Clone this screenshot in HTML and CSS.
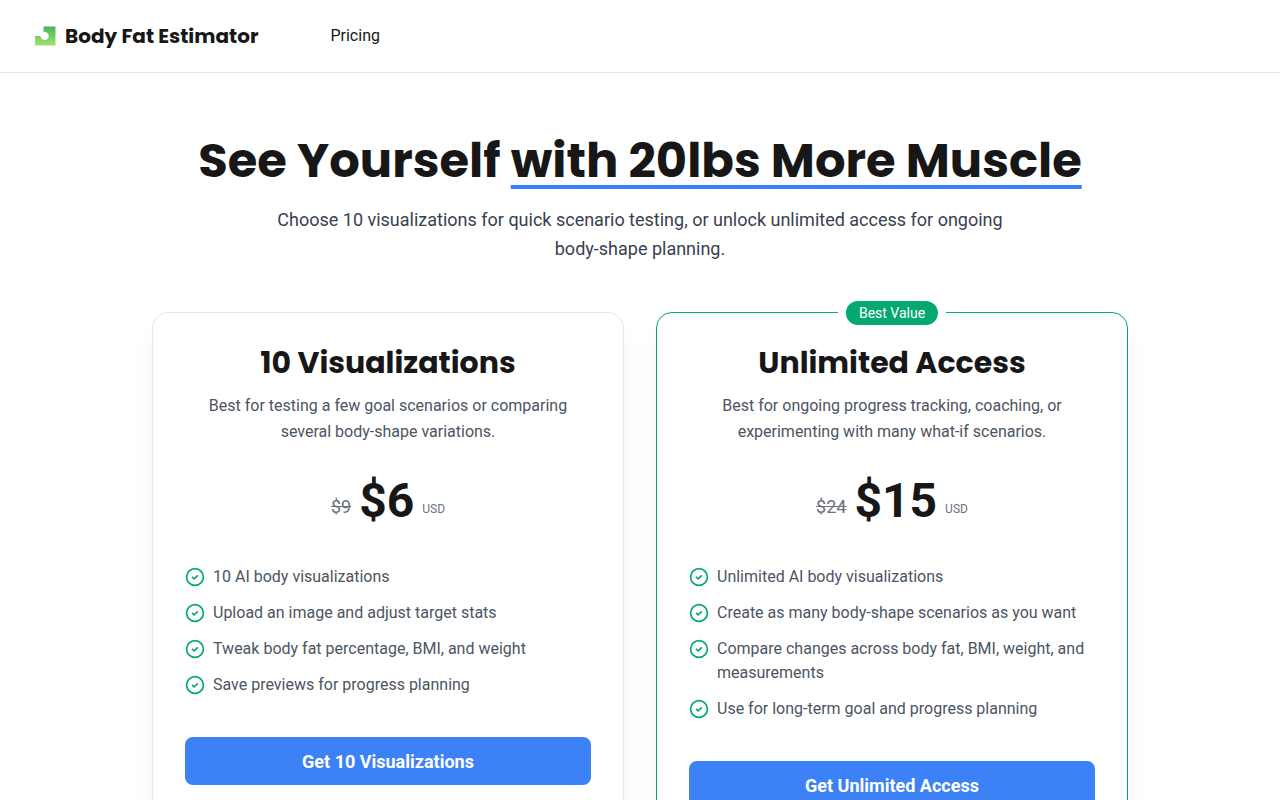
FILE: index.html
```html
<!DOCTYPE html>
<html lang="en">
<head>
    <meta charset="UTF-8">
    <meta name="viewport" content="width=device-width, initial-scale=1.0">
    <title>Pricing - Body Fat Estimator</title>
    <link rel="stylesheet" href="styles.css">
</head>
<body>
    <!-- Shared check icon for the feature lists -->
    <svg class="sprite" aria-hidden="true">
        <symbol id="check" viewBox="0 0 20 20">
            <circle cx="10" cy="10" r="8.4" fill="none" stroke="currentColor" stroke-width="1.7"/>
            <path d="M7 9.8l2.2 2 3.6-3.5" fill="none" stroke="currentColor" stroke-width="1.7"/>
        </symbol>
    </svg>

    <header class="site-header">
        <a class="brand" href="#">
            <svg class="logo" viewBox="0 0 22 22" aria-hidden="true">
                <defs>
                    <linearGradient id="logoFill" x1="0" y1="0" x2="0" y2="1">
                        <stop offset="0" stop-color="#48b461"/>
                        <stop offset="1" stop-color="#a1e36c"/>
                    </linearGradient>
                </defs>
                <path d="M9.5 1.5H21.5V20.5H1V11H6.5A4.1 4.1 0 1 0 9.5 7Z" fill="url(#logoFill)"/>
            </svg>
            <span>Body Fat Estimator</span>
        </a>
        <nav>
            <a class="nav-link" href="#pricing">Pricing</a>
        </nav>
    </header>

    <main class="container" id="pricing">
        <div class="hero">
            <h1>See Yourself <span class="underlined">with 20lbs More Muscle</span></h1>
            <p>Choose 10 visualizations for quick scenario testing, or unlock unlimited access for ongoing body-shape planning.</p>
        </div>

        <div class="plans">
            <section class="plan">
                <h2>10 Visualizations</h2>
                <p class="description">Best for testing a few goal scenarios or comparing several body-shape variations.</p>
                <div class="price">
                    <s>$9</s>
                    <strong>$6</strong>
                    <span class="currency">USD</span>
                </div>
                <ul class="features">
                    <li><svg class="check"><use href="#check"/></svg>10 AI body visualizations</li>
                    <li><svg class="check"><use href="#check"/></svg>Upload an image and adjust target stats</li>
                    <li><svg class="check"><use href="#check"/></svg>Tweak body fat percentage, BMI, and weight</li>
                    <li><svg class="check"><use href="#check"/></svg>Save previews for progress planning</li>
                </ul>
                <button type="button">Get 10 Visualizations</button>
            </section>

            <section class="plan featured">
                <div class="badge"><span>Best Value</span></div>
                <h2>Unlimited Access</h2>
                <p class="description">Best for ongoing progress tracking, coaching, or experimenting with many what-if scenarios.</p>
                <div class="price">
                    <s>$24</s>
                    <strong>$15</strong>
                    <span class="currency">USD</span>
                </div>
                <ul class="features">
                    <li><svg class="check"><use href="#check"/></svg>Unlimited AI body visualizations</li>
                    <li><svg class="check"><use href="#check"/></svg>Create as many body-shape scenarios as you want</li>
                    <li><svg class="check"><use href="#check"/></svg>Compare changes across body fat, BMI, weight, and measurements</li>
                    <li><svg class="check"><use href="#check"/></svg>Use for long-term goal and progress planning</li>
                </ul>
                <button type="button">Get Unlimited Access</button>
            </section>
        </div>
    </main>
</body>
</html>
```
FILE: styles.css
```css
* {
    box-sizing: border-box;
}
body {
    font-family: Roboto, sans-serif;
    font-size: 16px;
    line-height: 24px;
    margin: 0;
    color: #171717;
    background-color: #fff;
}
h1,
h2,
p,
ul {
    margin: 0;
    padding: 0;
}
h1,
h2,
.brand {
    font-family: Poppins, Inter, sans-serif;
    font-weight: 700;
}
a {
    color: inherit;
    text-decoration: none;
}
.sprite {
    display: none;
}

/* Header */
.site-header {
    display: flex;
    align-items: center;
    gap: 72px;
    padding: 22px 34px;
    border-bottom: 1px solid #e5e7eb;
}
.brand {
    display: flex;
    align-items: center;
    gap: 9px;
    font-size: 20px;
    line-height: 28px;
}
.logo {
    width: 22px;
    height: 22px;
}

/* Hero */
.container {
    max-width: 1024px;
    margin: 0 auto;
    padding: 64px 24px;
}
.hero {
    text-align: center;
    margin-bottom: 49px;
}
h1 {
    font-size: 48px;
    line-height: 48px;
    margin-bottom: 20px;
}
.underlined {
    text-decoration: underline;
    text-decoration-color: #3c82f6;
    text-decoration-thickness: 4px;
    text-underline-offset: 8px;
    text-decoration-skip-ink: none;
}
.hero p {
    max-width: 768px;
    margin: 0 auto;
    font-size: 18px;
    line-height: 29px;
    color: #374151;
}

/* Plans */
.plans {
    display: grid;
    grid-template-columns: 1fr 1fr;
    gap: 32px;
}
.plan {
    position: relative;
    display: flex;
    flex-direction: column;
    justify-content: flex-start;
    padding: 32px;
    border: 1px solid #e5e7eb;
    border-radius: 16px;
    background-color: #fff;
    text-align: center;
    box-shadow: 0 20px 25px -5px rgba(0, 0, 0, 0.08);
}
.featured {
    border-color: #04a971;
}
.badge {
    position: absolute;
    top: -12px;
    left: 50%;
    transform: translateX(-50%);
    padding: 0 8px;
    background-color: #fff;
}
.badge span {
    display: block;
    padding: 0 13px;
    border-radius: 12px;
    background-color: #04a971;
    color: #fff;
    font-size: 14px;
    line-height: 24px;
    white-space: nowrap;
}
h2 {
    font-size: 30px;
    line-height: 36px;
    margin-bottom: 12px;
}
.description {
    padding: 0 16px;
    line-height: 26px;
    color: #4b5563;
}
.price {
    display: flex;
    justify-content: center;
    align-items: flex-end;
    gap: 8px;
    margin: 32px 0 40px;
    color: #6b7280;
}
.price s {
    font-size: 18px;
    line-height: 28px;
    margin-bottom: 4px;
}
.price strong {
    font-size: 48px;
    line-height: 48px;
    color: #171717;
}
.currency {
    font-size: 12px;
    margin-bottom: 4px;
}
.features {
    display: flex;
    flex-direction: column;
    gap: 12px;
    margin-bottom: 40px;
    list-style: none;
    text-align: left;
    color: #4b5563;
}
.features li {
    display: flex;
    gap: 8px;
}
.check {
    flex: none;
    width: 20px;
    height: 20px;
    margin-top: 2px;
    color: #04a971;
}
button {
    height: 48px;
    border: none;
    border-radius: 8px;
    background-color: #3c82f6;
    color: #fff;
    font-family: inherit;
    font-size: 18px;
    font-weight: 700;
    cursor: pointer;
}
button:hover {
    background-color: #2563eb;
}

@media (max-width: 768px) {
    .plans {
        grid-template-columns: 1fr;
    }
}
```
